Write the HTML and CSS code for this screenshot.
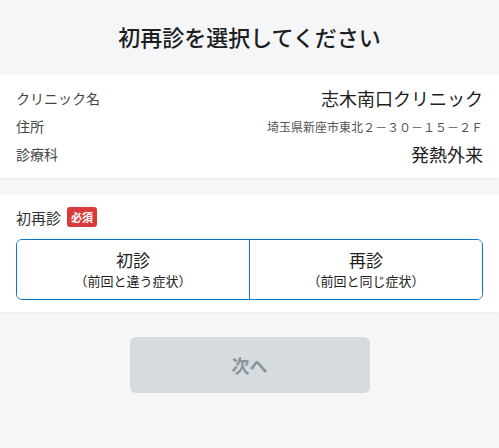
FILE: index.html
```html
<!DOCTYPE html>
<html lang="ja">
<head>
  <meta charset="UTF-8" />
  <title>初再診を選択してください</title>
  <meta name="viewport" content="width=device-width, initial-scale=1.0" />
  <link rel="stylesheet" href="styles.css">
</head>
<body>
  <header class="page-header">
    <h1>初再診を選択してください</h1>
  </header>

  <section class="card info-card">
    <div class="info-row">
      <span class="info-label">クリニック名</span>
      <span class="info-value">志木南口クリニック</span>
    </div>
    <div class="info-row">
      <span class="info-label">住所</span>
      <span class="info-value small">埼玉県新座市東北２－３０－１５－２Ｆ</span>
    </div>
    <div class="info-row">
      <span class="info-label">診療科</span>
      <span class="info-value">発熱外来</span>
    </div>
  </section>

  <section class="card select-card">
    <div class="field-label">
      <span>初再診</span>
      <span class="required">必須</span>
    </div>
    <div class="choice-group">
      <button class="choice">
        <span class="choice-title">初診</span>
        <span class="choice-sub">（前回と違う症状）</span>
      </button>
      <button class="choice">
        <span class="choice-title">再診</span>
        <span class="choice-sub">（前回と同じ症状）</span>
      </button>
    </div>
  </section>

  <div class="actions">
    <button class="next-button" disabled>次へ</button>
  </div>
</body>
</html>
```

FILE: styles.css
```css
* {
  box-sizing: border-box;
  margin: 0;
  padding: 0;
}

body {
  font-family: "Noto Sans CJK JP", "Noto Sans", sans-serif;
  background: #f5f6f8;
  color: #222;
}

.page-header {
  height: 75px;
  display: flex;
  align-items: center;
  justify-content: center;
}

.page-header h1 {
  font-size: 22px;
  font-weight: 500;
  color: #1e1e1e;
  margin-top: -3px;
}

.card {
  background: #ffffff;
  box-shadow: 0 1px 3px rgba(0, 0, 0, 0.06);
}

.info-card {
  padding: 9px 16px 10px;
}

.info-row {
  display: flex;
  justify-content: space-between;
  align-items: center;
  height: 28px;
}

.info-label {
  font-size: 14px;
  color: #444;
}

.info-value {
  font-size: 18px;
  color: #1e1e1e;
}

.info-value.small {
  font-size: 12px;
  color: #555;
}

.select-card {
  margin-top: 17px;
  padding: 11px 16px 12px;
}

.field-label {
  display: flex;
  align-items: center;
  gap: 6px;
  height: 22px;
  font-size: 15px;
  color: #333;
  margin-bottom: 11px;
}

.required {
  background: #d93a3a;
  color: #fff;
  font-size: 11px;
  font-weight: bold;
  padding: 0 4px;
  line-height: 20px;
  border-radius: 3px;
}

.choice-group {
  display: flex;
  border: 1px solid #0a78c8;
  border-radius: 6px;
  overflow: hidden;
  height: 61px;
}

.choice {
  flex: 1;
  display: flex;
  flex-direction: column;
  align-items: center;
  justify-content: center;
  background: #fff;
  border: none;
  font-family: inherit;
  color: #1e1e1e;
  cursor: pointer;
}

.choice + .choice {
  border-left: 1px solid #0a78c8;
}

.choice-title {
  font-size: 17px;
  line-height: 22px;
}

.choice-sub {
  font-size: 13px;
  line-height: 20px;
}

.actions {
  display: flex;
  justify-content: center;
  margin-top: 25px;
}

.next-button {
  width: 240px;
  height: 56px;
  border: none;
  border-radius: 6px;
  background: #d5dbdf;
  color: #8a959b;
  font-family: inherit;
  font-size: 18px;
  font-weight: bold;
}
```
